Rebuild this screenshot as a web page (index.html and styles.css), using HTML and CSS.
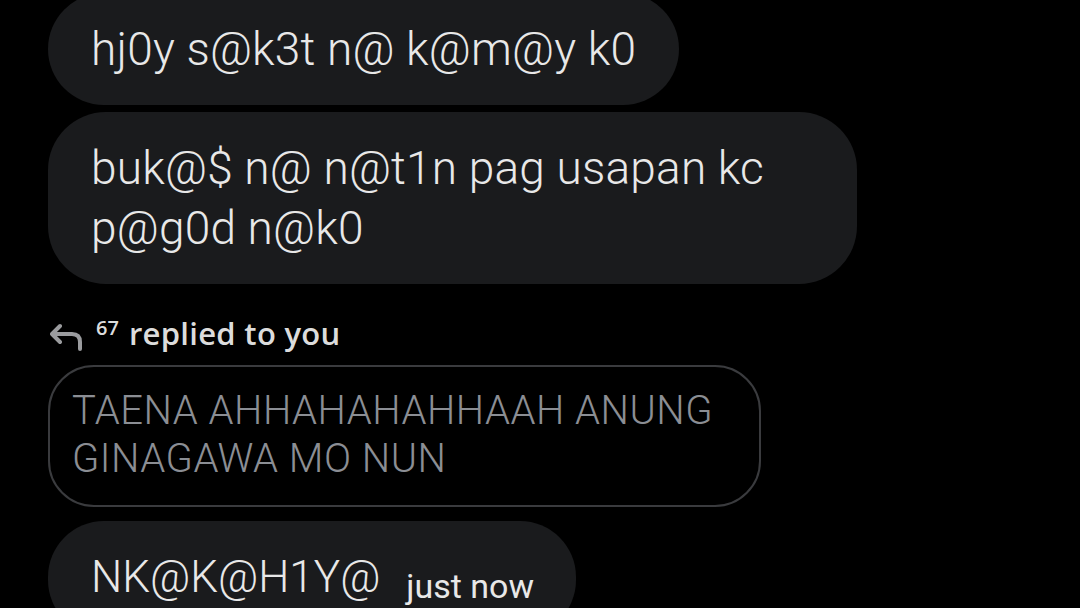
FILE: index.html
```html
<!DOCTYPE html>
<html>
<head>
<meta charset="utf-8">
<link rel="stylesheet" href="styles.css">
</head>
<body>
<div class="chat">
  <div class="bubble first">hj0y s@k3t n@ k@m@y k0</div>
  <div class="bubble wide">buk@$ n@ n@t1n pag usapan kc<br>p@g0d n@k0</div>
  <div class="reply-head">
    <svg class="reply-icon" width="34" height="30" viewBox="0 0 34 30"><path d="M10 5 L2 13 L10 21 M2 13 H22 Q30 13 30 21 V28" fill="none" stroke="#9a9b9e" stroke-width="4" stroke-linecap="round" stroke-linejoin="round"/></svg>
    <sup class="num">67</sup><span class="rtext">replied to you</span>
  </div>
  <div class="quoted">TAENA AHHAHAHAHHAAH ANUNG<br>GINAGAWA MO NUN</div>
  <div class="bubble last"><span class="msg">NK@K@H1Y@</span><span class="time">just now</span></div>
</div>
</body>
</html>
```
FILE: styles.css
```css
html, body {
  margin: 0;
  padding: 0;
  background: #000;
  width: 1080px;
  height: 608px;
  overflow: hidden;
}
.chat {
  display: flex;
  flex-direction: column;
  align-items: flex-start;
  padding-left: 48px;
  margin-top: -7px;
  font-family: Roboto, "Liberation Sans", sans-serif;
}
.bubble {
  background: #1a1b1d;
  color: #e8e8e8;
  font-size: 46px;
  font-weight: 300;
  line-height: 60px;
  padding: 26px 43px;
  border-radius: 56px;
  margin-bottom: 7px;
  letter-spacing: 0.2px;
}
.bubble.wide {
  width: 723px;
  border-radius: 58px;
}
.reply-head {
  display: flex;
  align-items: center;
  margin-top: 19px;
  height: 46px;
  color: #dcdcdc;
  font-family: "Open Sans", sans-serif;
  font-weight: 600;
}
.reply-icon {
  margin-left: 2px;
  margin-top: 6px;
}
.num {
  font-size: 20px;
  margin-left: 12px;
  align-self: flex-start;
  margin-top: 4px;
}
.rtext {
  font-size: 31px;
  margin-left: 10px;
  letter-spacing: 0.3px;
}
.quoted {
  margin-top: 9px;
  border: 2px solid #3a3b3e;
  border-radius: 46px;
  padding: 20px 45px 22px 22px;
  color: #8b8e94;
  font-size: 40px;
  font-weight: 300;
  line-height: 48px;
  letter-spacing: 0.5px;
  width: 642px;
}
.bubble.last {
  margin-top: 14px;
  display: flex;
  align-items: baseline;
  padding-right: 42px;
}
.msg {
  font-size: 44px;
  letter-spacing: 0;
}
.time {
  font-size: 34px;
  font-weight: 400;
  letter-spacing: 0;
  margin-left: 26px;
  position: relative;
  top: 6px;
  color: #e8e8e8;
}
```
